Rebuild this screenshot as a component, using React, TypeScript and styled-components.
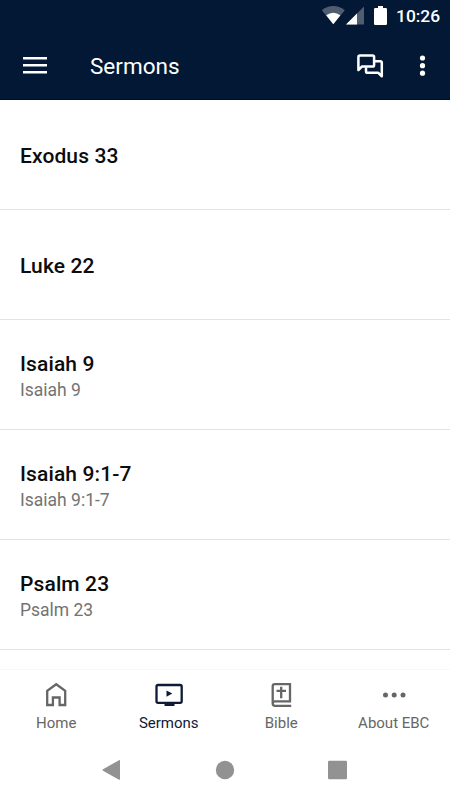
import React from 'react';
import styled, { createGlobalStyle } from 'styled-components';

const GlobalStyle = createGlobalStyle`
  * { box-sizing: border-box; }
  body { margin: 0; background: #fff; font-family: Roboto, sans-serif; }
`;

const Screen = styled.div`
  display: flex;
  flex-direction: column;
  width: 450px;
  height: 800px;
  overflow: hidden;
  background: #fff;
`;

const Header = styled.header`
  flex: none;
  height: 100px;
  background: #031834;
  border-bottom: 1px solid #010c20;
  color: #fff;
`;

const StatusBar = styled.div`
  display: flex;
  justify-content: flex-end;
  height: 32px;
  padding-right: 10px;
`;

const Clock = styled.time`
  width: 44px;
  font-size: 17.4px;
  line-height: 32px;
  font-weight: 500;
  white-space: nowrap;
`;

const Toolbar = styled.div`
  display: flex;
  align-items: center;
  height: 67px;
  padding: 0 12px 0 20px;
`;

const IconButton = styled.button`
  display: flex;
  padding: 0;
  border: 0;
  background: none;
  color: inherit;
`;

const Title = styled.h1`
  flex: 1;
  margin: 0 0 0 40px;
  font-size: 22.5px;
  line-height: 30px;
  font-weight: 400;
`;

const Actions = styled.div`
  display: flex;
  gap: 22px;
`;

const List = styled.main`
  flex: none;
  height: 569px;
  overflow: hidden;
`;

const Row = styled.article`
  display: flex;
  flex-direction: column;
  justify-content: center;
  height: 110px;
  padding: 2px 20px 0;
  border-bottom: 1px solid #e3e3e3;
`;

const RowTitle = styled.h2`
  margin: 0;
  font-size: 21px;
  letter-spacing: 0.12px;
  line-height: 28px;
  font-weight: 500;
  color: #0c0c0c;
`;

const RowSubtitle = styled.p`
  margin: 0;
  font-size: 17.5px;
  line-height: 24px;
  color: #737373;
`;

const Tabs = styled.nav`
  flex: none;
  display: grid;
  grid-template-columns: repeat(4, 1fr);
  height: 71px;
  border-top: 1px solid #f8f8f8;
`;

const Tab = styled.a<{ $active?: boolean }>`
  display: flex;
  flex-direction: column;
  align-items: center;
  padding-top: 10px;
  color: ${(p) => (p.$active ? '#101a36' : '#666')};
`;

const TabLabel = styled.span`
  margin-top: 3px;
  font-size: 15px;
  line-height: 20px;
  white-space: nowrap;
`;

const SystemBar = styled.div`
  flex: none;
  height: 60px;
`;

const sermons = [
  { title: 'Exodus 33' },
  { title: 'Luke 22' },
  { title: 'Isaiah 9', subtitle: 'Isaiah 9' },
  { title: 'Isaiah 9:1-7', subtitle: 'Isaiah 9:1-7' },
  { title: 'Psalm 23', subtitle: 'Psalm 23' },
];

const StatusIcons = () => (
  <svg width="76" height="32" viewBox="320 0 76 32" fill="#fff">
    <path d="M321.8 10.2Q333.3 2 344.8 10.2L333.3 24.3Z" opacity=".3" />
    <path d="M326.2 15.3Q333.3 10.2 340.4 15.3L333.3 24.3Z" />
    <path d="M364 6.5V24.5H346Z" opacity=".3" />
    <path d="M357 13.5V24.5H346Z" />
    <path d="M378 6h5v2h2.8q1.2 0 1.2 1.2v14.6q0 1.2-1.2 1.2h-10.6q-1.2 0-1.2-1.2V9.2q0-1.2 1.2-1.2h2.8Z" />
  </svg>
);

const MenuIcon = () => (
  <svg width="30" height="30" viewBox="0 0 30 30" fill="currentColor">
    <path d="M3 6h24v2.6H3zM3 13h24v2.6H3zM3 20h24v2.6H3z" />
  </svg>
);

const ChatIcon = () => (
  <svg width="30" height="30" viewBox="355 50 30 30" fill="none" stroke="currentColor" strokeWidth="2.5" strokeLinejoin="round">
    <path d="M358.4 69V56q0-1.6 1.6-1.6h12.5q1.6 0 1.6 1.6v8q0 1.6-1.6 1.6h-10.7Z" />
    <path d="M374.5 60.2h5.7q1.6 0 1.6 1.6V75.3l-3.5-3.5h-10.7q-1.6 0-1.6-1.6v-4" />
  </svg>
);

const KebabIcon = () => (
  <svg width="31" height="30" viewBox="407 50 31 30" fill="currentColor">
    <circle cx="422.5" cy="57" r="2.6" />
    <circle cx="422.5" cy="64.7" r="2.6" />
    <circle cx="422.5" cy="72.2" r="2.6" />
  </svg>
);

const HomeIcon = () => (
  <svg width="32" height="30" viewBox="40 680 32 30" fill="none" stroke="currentColor" strokeWidth="2.3">
    <path d="M47.2 705V690.8L56.2 684.2L65.2 690.8V705H59.6V697.5H52.9V705Z" />
  </svg>
);

const SermonsIcon = () => (
  <svg width="32" height="30" viewBox="152.5 680 32 30" fill="currentColor">
    <rect x="156" y="685" width="25.2" height="17.8" rx="1.6" fill="none" stroke="currentColor" strokeWidth="2.3" />
    <path d="M164 703h10v3h-10zM166 690.4v6.4l5.8-3.2z" />
  </svg>
);

const BibleIcon = () => (
  <svg width="32" height="30" viewBox="265 680 32 30" fill="none" stroke="currentColor" strokeWidth="2.3">
    <path d="M291.2 705.8H275q-2.3 0-2.3-2.3V686.3q0-2.1 2.3-2.1H290V701.3H275q-2.3 0-2.3 2.2" />
    <path d="M281.2 686.8V698.3M276.5 690.8H286" />
  </svg>
);

const MoreIcon = () => (
  <svg width="32" height="30" viewBox="377.5 680 32 30" fill="currentColor">
    <circle cx="385" cy="695" r="2.5" />
    <circle cx="393.7" cy="695" r="2.5" />
    <circle cx="402.5" cy="695" r="2.5" />
  </svg>
);

const SystemIcons = () => (
  <svg width="450" height="60" viewBox="0 740 450 60" fill="#929292">
    <path d="M119 760.2Q120 759.8 120 761V779Q120 780.2 119 779.7L103 770.7Q102 770 103 769.3Z" />
    <circle cx="225" cy="770" r="9.2" />
    <rect x="328" y="760.7" width="19" height="18.6" rx="1.3" />
  </svg>
);

export default function App() {
  return (
    <Screen>
      <GlobalStyle />
      <Header>
        <StatusBar>
          <StatusIcons />
          <Clock>10:26</Clock>
        </StatusBar>
        <Toolbar>
          <IconButton aria-label="Menu"><MenuIcon /></IconButton>
          <Title>Sermons</Title>
          <Actions>
            <IconButton aria-label="Messages"><ChatIcon /></IconButton>
            <IconButton aria-label="More options"><KebabIcon /></IconButton>
          </Actions>
        </Toolbar>
      </Header>
      <List>
        {sermons.map(({ title, subtitle }) => (
          <Row key={title}>
            <RowTitle>{title}</RowTitle>
            {subtitle && <RowSubtitle>{subtitle}</RowSubtitle>}
          </Row>
        ))}
      </List>
      <Tabs>
        <Tab><HomeIcon /><TabLabel>Home</TabLabel></Tab>
        <Tab $active><SermonsIcon /><TabLabel>Sermons</TabLabel></Tab>
        <Tab><BibleIcon /><TabLabel>Bible</TabLabel></Tab>
        <Tab><MoreIcon /><TabLabel>About EBC</TabLabel></Tab>
      </Tabs>
      <SystemBar><SystemIcons /></SystemBar>
    </Screen>
  );
}
